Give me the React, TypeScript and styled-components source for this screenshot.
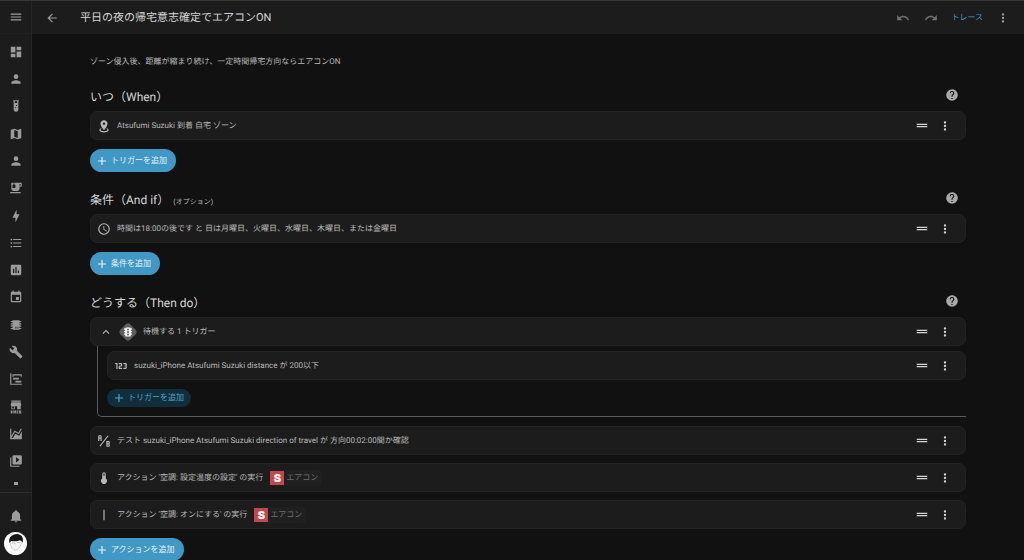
import React from "react";
import styled, { createGlobalStyle } from "styled-components";

const GlobalStyle = createGlobalStyle`
  * { box-sizing: border-box; }
  body {
    margin: 0;
    background: #111111;
    color: #b9b9b9;
    font-family: Roboto, "Noto Sans CJK JP", sans-serif;
    font-size: 8px;
    line-height: 16px;
    text-rendering: geometricPrecision;
  }
  button { font: inherit; color: inherit; background: none; border: 0; padding: 0; cursor: pointer; }
  a { color: inherit; text-decoration: none; }
  h1, h2, p, ul { margin: 0; padding: 0; font-weight: 400; list-style: none; }
`;

const paths = {
  menu: "M3,6H21V8H3V6M3,11H21V13H3V11M3,16H21V18H3V16Z",
  dashboard: "M13,3V9H21V3M13,21H21V11H13M3,21H11V15H3M3,13H11V3H3V13Z",
  account:
    "M12,4A4,4 0 0,1 16,8A4,4 0 0,1 12,12A4,4 0 0,1 8,8A4,4 0 0,1 12,4M12,14C16.42,14 20,15.79 20,18V20H4V18C4,15.79 7.58,14 12,14Z",
  tube: "M7,2V4H8V18A4,4 0 0,0 12,22A4,4 0 0,0 16,18V4H17V2H7M11,16C10.4,16 10,15.6 10,15C10,14.4 10.4,14 11,14C11.6,14 12,14.4 12,15C12,15.6 11.6,16 11,16M13,12C12.4,12 12,11.6 12,11C12,10.4 12.4,10 13,10C13.6,10 14,10.4 14,11C14,11.6 13.6,12 13,12M14,7H10V4H14V7Z",
  map: "M20.5,3L20.34,3.03L15,5.1L9,3L3.36,4.9C3.15,4.97 3,5.15 3,5.38V20.5A0.5,0.5 0 0,0 3.5,21L3.66,20.97L9,18.9L15,21L20.64,19.1C20.85,19.03 21,18.85 21,18.62V3.5A0.5,0.5 0 0,0 20.5,3M15,19L9,16.89V5L15,7.11V19Z",
  tea: "M2 19H20V21H2V19M20 3H9V5.4L10.81 6.85C10.93 6.94 11 7.09 11 7.24V11.5C11 11.78 10.78 12 10.5 12H6.5C6.22 12 6 11.78 6 11.5V7.24C6 7.09 6.07 6.94 6.19 6.85L8 5.4V3H4V13C4 15.21 5.79 17 8 17H14C16.21 17 18 15.21 18 13V10H20C21.11 10 22 9.11 22 8V5C22 3.89 21.11 3 20 3M20 8H18V5H20V8Z",
  bolt: "M11 15H6L13 1V9H18L11 23V15Z",
  list: "M7,5H21V7H7V5M7,13V11H21V13H7M4,4.5A1.5,1.5 0 0,1 5.5,6A1.5,1.5 0 0,1 4,7.5A1.5,1.5 0 0,1 2.5,6A1.5,1.5 0 0,1 4,4.5M4,10.5A1.5,1.5 0 0,1 5.5,12A1.5,1.5 0 0,1 4,13.5A1.5,1.5 0 0,1 2.5,12A1.5,1.5 0 0,1 4,10.5M7,19V17H21V19H7M4,16.5A1.5,1.5 0 0,1 5.5,18A1.5,1.5 0 0,1 4,19.5A1.5,1.5 0 0,1 2.5,18A1.5,1.5 0 0,1 4,16.5Z",
  chartBox:
    "M9 17H7V10H9V17M13 17H11V7H13V17M17 17H15V13H17V17M19 3H5C3.89 3 3 3.89 3 5V19C3 20.1 3.89 21 5 21H19C20.1 21 21 20.1 21 19V5C21 3.89 20.1 3 19 3Z",
  calendar:
    "M19,19H5V8H19M16,1V3H8V1H6V3H5C3.89,3 3,3.89 3,5V19A2,2 0 0,0 5,21H19A2,2 0 0,0 21,19V5C21,3.89 20.1,3 19,3H18V1M17,12H12V17H17V12Z",
  chip: "M6,4H18V5H21V7H18V9H21V11H18V13H21V15H18V17H21V19H18V20H6V19H3V17H6V15H3V13H6V11H3V9H6V7H3V5H6V4M11,15V18H12V15H11M13,15V18H14V15H13M15,15V18H16V15H15Z",
  wrench:
    "M22.7,19L13.6,9.9C14.5,7.6 14,4.9 12.1,3C10.1,1 7.1,0.6 4.7,1.7L9,6L6,9L1.6,4.7C0.4,7.1 0.9,10.1 2.9,12.1C4.8,14 7.5,14.5 9.8,13.6L18.9,22.7C19.3,23.1 19.9,23.1 20.3,22.7L22.6,20.4C23.1,20 23.1,19.3 22.7,19Z",
  timeline:
    "M2,2H4V20H22V22H2V2M7,10H17V13H7V10M11,15H21V18H11V15M6,4H22V8H20V6H8V8H6V4Z",
  store:
    "M4 1H20V3H4V1M4 4H20L21 8V10H20V16H14V10.500H10V16H4V10H3V8L4 4M5.500 11V14.500H8.500V11H5.500M3 18H5V19.500H6.500V18H8V23H6.500V21H5V23H3V18M9 18H12V23H10.800V21.500H10V23H9V18M13 18H16V19.500H14.500V21.500H16V23H13V18M17 18H21V19.500H18.500V20H21V23H17V21.500H19.500V21H17V18Z",
  area: "M17.45,15.18L22,7.31V21H2V3H4V15.54L9.5,6L16,9.78L20.24,2.45L21.97,3.45L16.74,12.5L10.23,8.75L4.31,19H6.57L10.96,11.44L17.45,15.18Z",
  media:
    "M4,6H2V20A2,2 0 0,0 4,22H18V20H4V6M20,2H8A2,2 0 0,0 6,4V16A2,2 0 0,0 8,18H20A2,2 0 0,0 22,16V4A2,2 0 0,0 20,2M12,14.5V5.5L18,10L12,14.5Z",
  bell: "M21,19V20H3V19L5,17V11C5,7.9 7.03,5.17 10,4.29C10,4.19 10,4.1 10,4A2,2 0 0,1 12,2A2,2 0 0,1 14,4C14,4.1 14,4.19 14,4.29C16.97,5.17 19,7.9 19,11V17L21,19M14,21A2,2 0 0,1 12,23A2,2 0 0,1 10,21",
  back: "M20,11V13H8L13.5,18.5L12.08,19.92L4.16,12L12.08,4.08L13.5,5.5L8,11H20Z",
  undo: "M12.5,8C9.85,8 7.45,9 5.6,10.6L2,7V16H11L7.38,12.38C8.77,11.22 10.54,10.5 12.5,10.5C16.04,10.5 19.05,12.81 20.1,16L22.47,15.22C21.08,11.03 17.15,8 12.5,8Z",
  redo: "M18.4,10.6C16.55,9 14.15,8 11.5,8C6.85,8 2.92,11.03 1.54,15.22L3.9,16C4.95,12.81 7.95,10.5 11.5,10.5C13.45,10.5 15.23,11.22 16.62,12.38L13,16H22V7L18.4,10.6Z",
  dots: "M12,16A2,2 0 0,1 14,18A2,2 0 0,1 12,20A2,2 0 0,1 10,18A2,2 0 0,1 12,16M12,10A2,2 0 0,1 14,12A2,2 0 0,1 12,14A2,2 0 0,1 10,12A2,2 0 0,1 12,10M12,4A2,2 0 0,1 14,6A2,2 0 0,1 12,8A2,2 0 0,1 10,6A2,2 0 0,1 12,4Z",
  help: "M15.07,11.25L14.17,12.17C13.45,12.89 13,13.5 13,15H11V14.5C11,13.39 11.45,12.39 12.17,11.67L13.41,10.41C13.78,10.05 14,9.55 14,9C14,7.89 13.1,7 12,7A2,2 0 0,0 10,9H8A4,4 0 0,1 12,5A4,4 0 0,1 16,9C16,9.88 15.64,10.67 15.07,11.25M13,19H11V17H13M12,2A10,10 0 0,0 2,12A10,10 0 0,0 12,22A10,10 0 0,0 22,12C22,6.47 17.5,2 12,2Z",
  zone: "M12,2C15.31,2 18,4.66 18,7.95C18,12.41 12,19 12,19C12,19 6,12.41 6,7.95C6,4.66 8.69,2 12,2M12,6A2,2 0 0,0 10,8A2,2 0 0,0 12,10A2,2 0 0,0 14,8A2,2 0 0,0 12,6M20,19C20,21.21 16.42,23 12,23C7.58,23 4,21.21 4,19C4,17.71 5.22,16.56 7.11,15.83L7.75,16.74C6.67,17.19 6,17.81 6,18.5C6,19.88 8.69,21 12,21C15.31,21 18,19.88 18,18.5C18,17.81 17.33,17.19 16.25,16.74L16.89,15.83C18.78,16.56 20,17.71 20,19Z",
  clock:
    "M12,20A8,8 0 0,0 20,12A8,8 0 0,0 12,4A8,8 0 0,0 4,12A8,8 0 0,0 12,20M12,2A10,10 0 0,1 22,12A10,10 0 0,1 12,22C6.47,22 2,17.5 2,12A10,10 0 0,1 12,2M12.5,7V12.25L17,14.92L16.25,16.15L11,13V7H12.5Z",
  ab: "M4 2A2 2 0 0 0 2 4V12H4V8H6V12H8V4A2 2 0 0 0 6 2H4M4 4H6V6H4M22 15.5V14A2 2 0 0 0 20 12H16V22H20A2 2 0 0 0 22 20V18.5A1.54 1.54 0 0 0 20.5 17A1.54 1.54 0 0 0 22 15.5M20 20H18V18H20V20M20 16H18V14H20M5.79 21.61L4.21 20.39L18.21 2.39L19.79 3.61Z",
  thermometer:
    "M15 13V5A3 3 0 0 0 9 5V13A5 5 0 1 0 15 13M12 4A1 1 0 0 1 13 5V8H11V5A1 1 0 0 1 12 4Z",
  on: "M11,3H13V21H11V3Z",
  numeric:
    "M4,17V9H2V7H6V17H4M22,15C22,16.11 21.1,17 20,17H16V15H20V13H18V11H20V9H16V7H20A2,2 0 0,1 22,9V10.5A1.5,1.5 0 0,1 20.5,12A1.5,1.5 0 0,1 22,13.5V15M14,15V17H8V13C8,11.89 8.9,11 10,11H12V9H8V7H12A2,2 0 0,1 14,9V11C14,12.11 13.1,13 12,13H10V15H14Z",
  traffic:
    "M20,10H17V8.86C18.72,8.41 20,6.86 20,5H17V4A1,1 0 0,0 16,3H8A1,1 0 0,0 7,4V5H4C4,6.86 5.28,8.41 7,8.86V10H4C4,11.86 5.28,13.41 7,13.86V15H4C4,16.86 5.28,18.41 7,18.86V20A1,1 0 0,0 8,21H16A1,1 0 0,0 17,20V18.86C18.72,18.41 20,16.86 20,15H17V13.86C18.72,13.41 20,11.86 20,10M12,19A2,2 0 0,1 10,17A2,2 0 0,1 12,15A2,2 0 0,1 14,17A2,2 0 0,1 12,19M12,14A2,2 0 0,1 10,12A2,2 0 0,1 12,10A2,2 0 0,1 14,12A2,2 0 0,1 12,14M12,9A2,2 0 0,1 10,7A2,2 0 0,1 12,5A2,2 0 0,1 14,7A2,2 0 0,1 12,9Z",
  up: "M7.41,15.41L12,10.83L16.59,15.41L18,14L12,8L6,14L7.41,15.41Z",
  plus: "M19,13H13V19H11V13H5V11H11V5H13V11H19V13Z",
  drag: "M21 10.290H3V8.100H21V10.290M21 12H3V14.190H21V12Z",
};

type IconName = keyof typeof paths;

const Svg = styled.svg`
  display: block;
  flex: none;
  width: 14px;
  height: 14px;
  fill: currentColor;
`;

const Icon = ({ name }: { name: IconName }) => (
  <Svg viewBox="0 0 24 24" aria-hidden="true">
    <path fillRule="evenodd" d={paths[name]} />
  </Svg>
);

const Shell = styled.div`
  display: flex;
  height: 100vh;
  overflow: hidden;
  border-top: 1px solid #333739;
`;

const Sidebar = styled.aside`
  flex: none;
  display: flex;
  flex-direction: column;
  width: 32px;
  background: #1c1c1c;
  border-right: 1px solid #262626;
  color: #9b9b9b;
`;

const SidebarTop = styled.div`
  display: flex;
  align-items: center;
  justify-content: center;
  height: 33px;
  border-bottom: 1px solid #222222;
`;

const NavList = styled.ul`
  flex: 1;
  display: flex;
  flex-direction: column;
  padding-top: 4px;
`;

const NavItem = styled.li`
  flex: 1;
  display: flex;
`;

const NavLink = styled.a`
  flex: 1;
  display: flex;
  align-items: center;
  justify-content: center;
`;

const MoreMark = styled.div`
  display: flex;
  align-items: center;
  justify-content: center;
  height: 17px;

  &::before {
    content: "";
    width: 4px;
    height: 3px;
    background: #9b9b9b;
  }
`;

const SidebarBottom = styled.div`
  display: flex;
  flex-direction: column;
  align-items: center;
  gap: 9px;
  height: 68px;
  padding-top: 16px;
  border-top: 1px solid #2e2e2e;
`;

const Avatar = styled.svg`
  flex: none;
  width: 23px;
  height: 23px;
`;

const Page = styled.div`
  flex: 1;
  min-width: 0;
  display: flex;
  flex-direction: column;
`;

const Toolbar = styled.header`
  flex: none;
  display: flex;
  align-items: center;
  height: 33px;
  padding: 0 11px 0 10px;
  background: #1c1c1c;
  color: #9b9b9b;
`;

const Title = styled.h1`
  flex: 1;
  margin-left: 18px;
  color: #d6d6d6;
  font-size: 11px;
  line-height: 20px;
`;

const ToolbarActions = styled.div`
  display: flex;
  align-items: center;
  gap: 8px;
`;

const IconButton = styled.button<{ $dim?: boolean }>`
  flex: none;
  display: flex;
  align-items: center;
  justify-content: center;
  width: 20px;
  height: 20px;
  ${(p) => p.$dim && "color: #707070;"}
`;

const TraceLink = styled.a`
  margin: 0 2px;
  color: #4399bf;
`;

const Scroller = styled.main`
  flex: 1;
  min-height: 0;
  overflow-y: auto;
  scrollbar-width: none;
`;

const Content = styled.div`
  max-width: 876px;
  margin: 0 auto;
  padding: 21px 0;
`;

const Intro = styled.p`
  line-height: 14px;
`;

const Section = styled.section`
  margin-top: 16px;
`;

const SectionHead = styled.div`
  display: flex;
  justify-content: space-between;
  height: 22px;
  margin-bottom: 4px;
  color: #a8a8a8;
`;

const SectionTitle = styled.h2`
  align-self: flex-end;
  color: #d6d6d6;
  font-size: 12px;
  line-height: 20px;
`;

const Optional = styled.small`
  margin-left: 4px;
  color: #b9b9b9;
  font-size: 7px;
  line-height: 8px;
`;

const HelpSlot = styled.div`
  padding-right: 4px;
`;

const Card = styled.div<{ $group?: boolean }>`
  display: flex;
  align-items: center;
  gap: ${(p) => (p.$group ? 5 : 6)}px;
  height: 29px;
  padding: 0 10px 0 ${(p) => (p.$group ? 8 : 6)}px;
  background: #1c1c1c;
  border: 1px solid #232323;
  border-radius: 7px;
`;

const Cards = styled.div`
  display: flex;
  flex-direction: column;
  gap: 8px;
`;

const CardText = styled.p`
  flex: 1;
  display: flex;
  align-items: center;
  gap: 7px;
  white-space: nowrap;
`;

const CardActions = styled.div`
  display: flex;
  gap: 3px;
  color: #d6d6d6;
`;

const Diamond = styled.svg`
  flex: none;
  width: 20px;
  height: 20px;
`;

const Branch = styled.div`
  margin: 0 0 9px 7px;
  padding: 5px 0 9px 9px;
  border: solid #5c5c5c;
  border-width: 0 0 1px 1px;
  border-bottom-left-radius: 5px;
`;

const AddButton = styled.button<{ $small?: boolean }>`
  display: flex;
  align-items: center;
  gap: 2px;
  height: ${(p) => (p.$small ? 18 : 23)}px;
  margin-top: 9px;
  padding: 0 ${(p) => (p.$small ? 7 : 9)}px 0 5px;
  border-radius: 12px;
  background: ${(p) => (p.$small ? "#122e3d" : "#4298c5")};
  color: ${(p) => (p.$small ? "#4fa3c9" : "#e8f2f7")};
`;

const Chip = styled.span`
  display: flex;
  align-items: center;
  gap: 2px;
  padding-right: 4px;
  border-radius: 4px;
  background: #202020;
  color: #6e6e6e;
`;

const BrandMark = styled.span`
  width: 14px;
  height: 14px;
  background: #c4474b;
  color: #ffffff;
  font-family: Inter, sans-serif;
  font-size: 11px;
  font-weight: 900;
  line-height: 14px;
  text-align: center;
`;

const nav: [IconName, string][] = [
  ["dashboard", "ダッシュボード"],
  ["account", "ユーザー"],
  ["tube", "テスト"],
  ["map", "マップ"],
  ["account", "人物"],
  ["tea", "キッチン"],
  ["bolt", "エネルギー"],
  ["list", "ログブック"],
  ["chartBox", "履歴"],
  ["calendar", "カレンダー"],
  ["chip", "デバイス"],
  ["wrench", "ツール"],
  ["timeline", "タイムライン"],
  ["store", "ストア"],
  ["area", "グラフ"],
  ["media", "メディア"],
];

const RowActions = () => (
  <CardActions>
    <IconButton aria-label="並べ替え">
      <Icon name="drag" />
    </IconButton>
    <IconButton aria-label="メニュー">
      <Icon name="dots" />
    </IconButton>
  </CardActions>
);

const Row = ({ icon, children }: { icon: IconName; children: React.ReactNode }) => (
  <Card>
    <Icon name={icon} />
    <CardText>{children}</CardText>
    <RowActions />
  </Card>
);

const Head = ({ title, note }: { title: string; note?: string }) => (
  <SectionHead>
    <SectionTitle>
      {title}
      {note && <Optional>{note}</Optional>}
    </SectionTitle>
    <HelpSlot>
      <IconButton aria-label="ヘルプ">
        <Icon name="help" />
      </IconButton>
    </HelpSlot>
  </SectionHead>
);

const Add = ({ label, small }: { label: string; small?: boolean }) => (
  <AddButton $small={small}>
    <Icon name="plus" />
    {label}
  </AddButton>
);

const Entity = () => (
  <Chip>
    <BrandMark>S</BrandMark>
    エアコン
  </Chip>
);

export default function App() {
  return (
    <>
      <GlobalStyle />
      <Shell>
        <Sidebar>
          <SidebarTop>
            <IconButton aria-label="サイドバー">
              <Icon name="menu" />
            </IconButton>
          </SidebarTop>
          <NavList>
            {nav.map(([icon, label]) => (
              <NavItem key={label}>
                <NavLink href="#" aria-label={label}>
                  <Icon name={icon} />
                </NavLink>
              </NavItem>
            ))}
          </NavList>
          <MoreMark />
          <SidebarBottom>
            <Icon name="bell" />
            <Avatar viewBox="0 0 46 46" aria-hidden="true">
              <circle cx="23" cy="23" r="23" fill="#ffffff" />
              <path
                d="M13 22C13 32 18 37 24 36C30 34 34 29 35 19"
                fill="#f4f4f4"
                stroke="#a8a8a8"
                strokeWidth="1"
              />
              <path
                d="M11 22C8 11 16 4 26 4C36 5 40 12 37 22C36 18 34 17 31 17C26 19 18 19 14 18C13 20 13 21 11 22Z"
                fill="#161616"
              />
              <path d="M15 22H22V25M26 21H33" fill="none" stroke="#9a9a9a" strokeWidth="1" />
            </Avatar>
          </SidebarBottom>
        </Sidebar>
        <Page>
          <Toolbar>
            <IconButton aria-label="戻る">
              <Icon name="back" />
            </IconButton>
            <Title>平日の夜の帰宅意志確定でエアコンON</Title>
            <ToolbarActions>
              <IconButton $dim aria-label="元に戻す">
                <Icon name="undo" />
              </IconButton>
              <IconButton $dim aria-label="やり直す">
                <Icon name="redo" />
              </IconButton>
              <TraceLink href="#">トレース</TraceLink>
              <IconButton aria-label="メニュー">
                <Icon name="dots" />
              </IconButton>
            </ToolbarActions>
          </Toolbar>
          <Scroller>
            <Content>
              <Intro>ゾーン侵入後、距離が縮まり続け、一定時間帰宅方向ならエアコンON</Intro>
              <Section>
                <Head title="いつ（When）" />
                <Row icon="zone">Atsufumi Suzuki 到着 自宅 ゾーン</Row>
                <Add label="トリガーを追加" />
              </Section>
              <Section>
                <Head title="条件（And if）" note="(オプション)" />
                <Row icon="clock">
                  時間は18:00の後です と 日は月曜日、火曜日、水曜日、木曜日、または金曜日
                </Row>
                <Add label="条件を追加" />
              </Section>
              <Section>
                <Head title="どうする（Then do）" />
                <Card $group>
                  <Icon name="up" />
                  <Diamond viewBox="0 0 40 40" aria-hidden="true">
                    <rect x="6" y="6" width="28" height="28" rx="7" fill="#5e5e5e" transform="rotate(45 20 20)" />
                    <path fill="#ffffff" fillRule="evenodd" transform="translate(8 8)" d={paths.traffic} />
                  </Diamond>
                  <CardText>待機する 1 トリガー</CardText>
                  <RowActions />
                </Card>
                <Branch>
                  <Row icon="numeric">suzuki_iPhone Atsufumi Suzuki distance が 200以下</Row>
                  <Add small label="トリガーを追加" />
                </Branch>
                <Cards>
                  <Row icon="ab">
                    テスト suzuki_iPhone Atsufumi Suzuki direction of travel が 方向00:02:00間か確認
                  </Row>
                  <Row icon="thermometer">
                    アクション '空調: 設定温度の設定' の実行
                    <Entity />
                  </Row>
                  <Row icon="on">
                    アクション '空調: オンにする' の実行
                    <Entity />
                  </Row>
                </Cards>
                <Add label="アクションを追加" />
              </Section>
            </Content>
          </Scroller>
        </Page>
      </Shell>
    </>
  );
}
